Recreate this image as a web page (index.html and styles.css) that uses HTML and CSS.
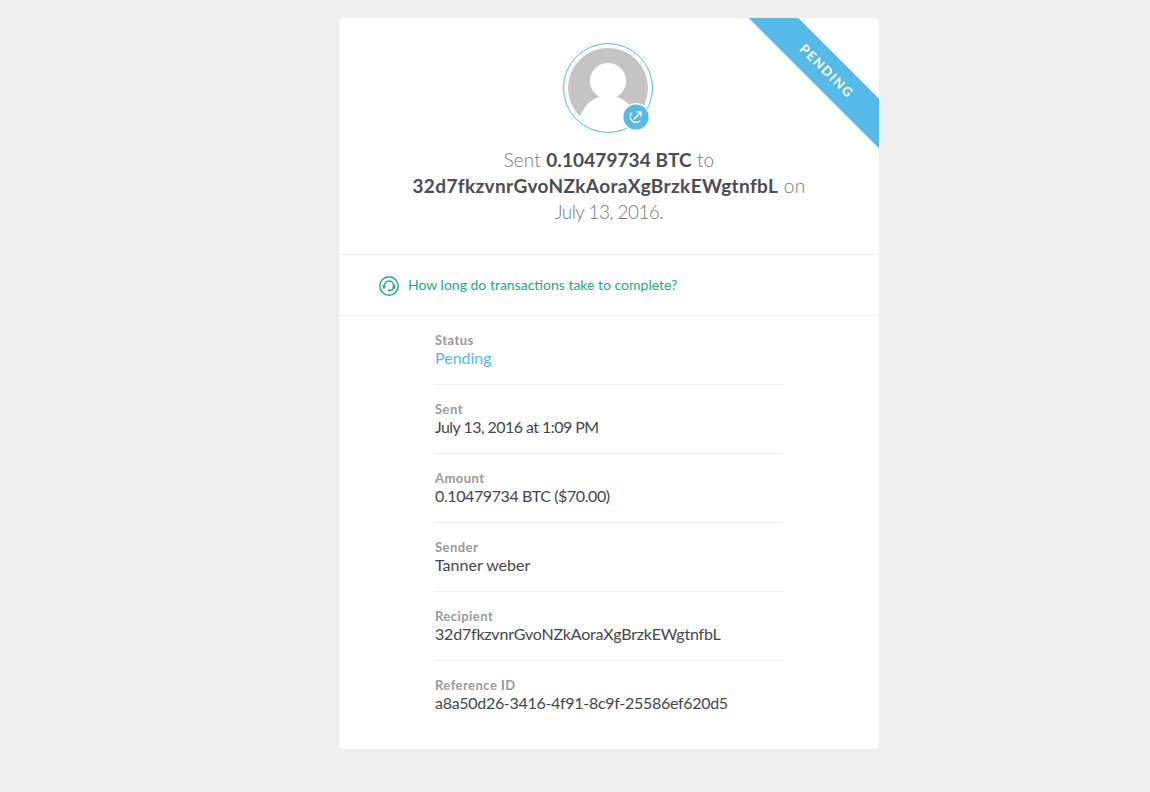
FILE: index.html
```html
<!DOCTYPE html>
<html lang="en">
<head>
    <meta charset="UTF-8">
    <meta name="viewport" content="width=device-width, initial-scale=1.0">
    <title>Transaction Details</title>
    <link rel="stylesheet" href="styles.css">
</head>
<body>
    <div class="card">
        <div class="ribbon">Pending</div>

        <div class="header">
            <div class="avatar">
                <svg class="avatar-img" viewBox="0 0 80 80">
                    <circle cx="40" cy="40" r="40" fill="#c4c4c4"/>
                    <circle cx="40" cy="33" r="18" fill="#fff"/>
                    <path d="M31 47 H49 V49 C58 52 64 58 68 69 L66 71 A40.500 40.500 0 0 1 14 71 L12 69 C16 58 22 52 31 49 Z" fill="#fff"/>
                    <path d="M12 68 L68 68 A40.800 40.800 0 0 1 12 68 Z" fill="#fff" stroke="#fff"/>
                </svg>
                <svg class="badge" viewBox="0 0 28 28">
                    <circle cx="14" cy="14" r="13.300" fill="#55b9ea" stroke="#fff" stroke-width="1.400"/>
                    <path d="M10 9.500 A5.800 5.800 0 1 0 18.300 17.600" fill="none" stroke="#fff" stroke-width="1.300"/>
                    <path d="M11.500 16.500 L18.800 9.200 M14.300 8.900 H19 V13.600" fill="none" stroke="#fff" stroke-width="1.300"/>
                </svg>
            </div>
            <h1 class="title">
                <span class="line-one">Sent <strong>0.10479734 BTC</strong> to</span><br>
                <span class="line-two"><strong>32d7fkzvnrGvoNZkAoraXgBrzkEWgtnfbL</strong> on</span><br>
                <span class="line-three">July 13, 2016.</span>
            </h1>
        </div>

        <a class="help">
            <svg class="help-icon" viewBox="0 0 20 20" fill="none" stroke="#13b07c">
                <circle cx="10" cy="10" r="9.250" stroke-width="1.400"/>
                <path d="M5.500 10.500 V9.500 A4.500 4.500 0 0 1 14.500 9.500 V10.500 C14.500 13 12.500 14.400 10 14.400" stroke-width="1.300"/>
                <path d="M5 8.800 V12.400 M15 8.800 V12.400" stroke-width="2.400"/>
                <path d="M8.800 14.400 H11" stroke-width="1.800"/>
            </svg>
            <span>How long do transactions take to complete?</span>
        </a>

        <dl class="details">
            <div class="row">
                <dt>Status</dt>
                <dd class="pending">Pending</dd>
            </div>
            <div class="row">
                <dt>Sent</dt>
                <dd class="date">July 13, 2016 at 1:09 PM</dd>
            </div>
            <div class="row">
                <dt>Amount</dt>
                <dd class="amount">0.10479734 BTC ($70.00)</dd>
            </div>
            <div class="row">
                <dt>Sender</dt>
                <dd class="sender">Tanner weber</dd>
            </div>
            <div class="row">
                <dt>Recipient</dt>
                <dd class="recipient">32d7fkzvnrGvoNZkAoraXgBrzkEWgtnfbL</dd>
            </div>
            <div class="row">
                <dt>Reference ID</dt>
                <dd class="reference">a8a50d26-3416-4f91-8c9f-25586ef620d5</dd>
            </div>
        </dl>
    </div>
</body>
</html>
```
FILE: styles.css
```css
* {
    box-sizing: border-box;
}
body {
    margin: 0;
    padding: 18px 0 43px 339px;
    background: #eee;
    color: #434649;
    font-family: Lato, "Open Sans", sans-serif;
}
.card {
    position: relative;
    width: 540px;
    height: 731px;
    background: #fff;
    border-radius: 5px;
    overflow: hidden;
}
.ribbon {
    position: absolute;
    top: 35px;
    left: 377px;
    width: 220px;
    height: 35px;
    padding-left: 2px;
    line-height: 34px;
    background: #55b9ea;
    color: #fff;
    font-size: 13px;
    font-weight: 700;
    letter-spacing: 1.6px;
    text-align: center;
    text-transform: uppercase;
    transform: rotate(45deg);
}
.header {
    height: 237px;
    padding: 25px 2px 0 0;
    border-bottom: 1px solid #eee;
}
.avatar {
    position: relative;
    width: 90px;
    height: 90px;
    margin: 0 auto;
    padding: 4px;
    border: 1px solid #55b9ea;
    border-radius: 50%;
}
.avatar-img {
    display: block;
    width: 80px;
    height: 80px;
}
.badge {
    position: absolute;
    right: 2.5px;
    bottom: 1.5px;
    width: 28px;
    height: 28px;
}
.title {
    margin: 14px 0 0 2px;
    color: #777;
    font-size: 19px;
    font-weight: 300;
    line-height: 26px;
    text-align: center;
}
.title strong {
    color: #4b4d50;
    font-weight: 700;
}
.line-one {
    letter-spacing: 0.1px;
}
.line-two {
    letter-spacing: 0.37px;
}
.line-three {
    letter-spacing: -0.57px;
}
.help {
    display: flex;
    align-items: center;
    gap: 9px;
    height: 61px;
    padding: 1px 0 0 40px;
    border-bottom: 1px dotted #ddd;
    color: #13b07c;
    font-size: 14px;
}
.help span {
    padding-bottom: 2px;
}
.help-icon {
    width: 20px;
    height: 20px;
}
.details {
    width: 348px;
    margin: 0 0 0 96px;
}
.row {
    height: 69px;
    padding-top: 15px;
    border-bottom: 1px solid #eee;
}
.row:last-child {
    border-bottom: none;
}
dt {
    color: #999;
    font-size: 13px;
    font-weight: 700;
    line-height: 18px;
    letter-spacing: 0.45px;
}
dd {
    margin: 0;
    font-size: 16px;
    line-height: 18px;
}
dd.pending {
    color: #55b9ea;
}
.date {
    letter-spacing: -0.55px;
}
.amount {
    letter-spacing: -0.4px;
}
.recipient {
    letter-spacing: -0.2px;
}
.reference {
    letter-spacing: -0.3px;
}
```
